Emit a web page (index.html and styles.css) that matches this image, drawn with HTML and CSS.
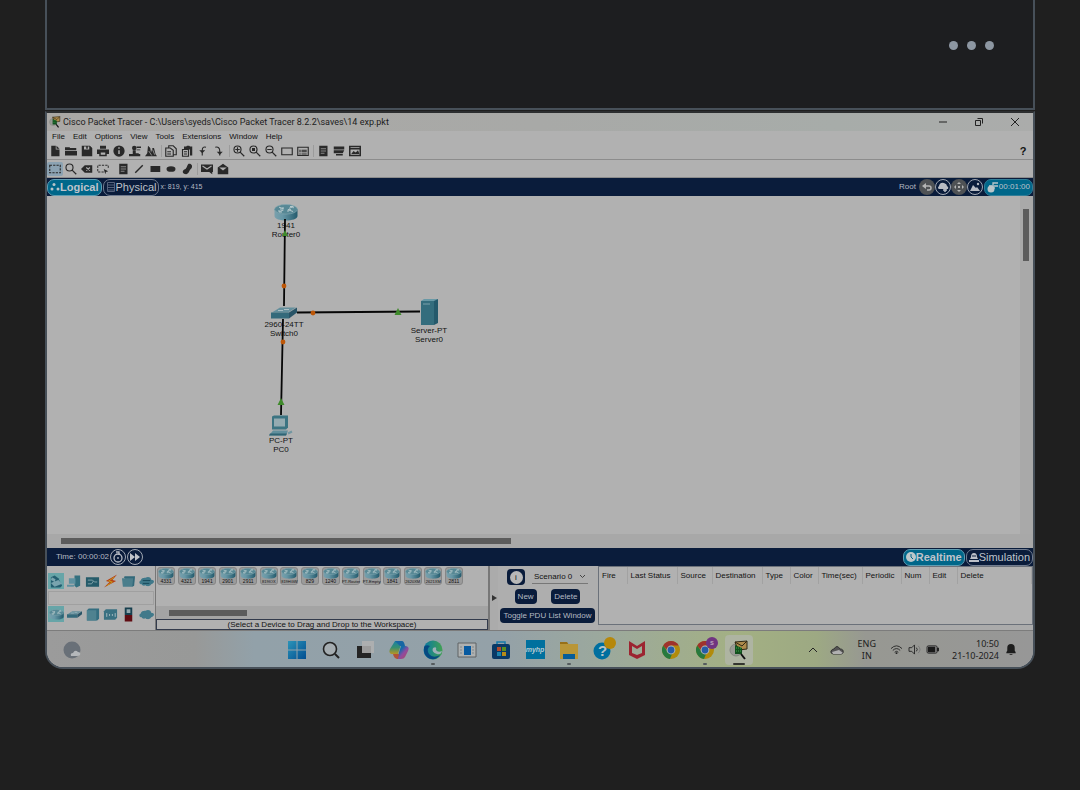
FILE: index.html
```html
<!DOCTYPE html>
<html lang="en">
<head>
<meta charset="utf-8">
<title>Cisco Packet Tracer</title>
<link rel="stylesheet" href="styles.css">
</head>
<body>
<svg class="sprite" aria-hidden="true">
  <defs>
    <linearGradient id="teal" x1="0" x2="1"><stop offset="0" stop-color="#79a0ac"/><stop offset=".35" stop-color="#6797a6"/><stop offset="1" stop-color="#245b6d"/></linearGradient>
    <linearGradient id="win" x1="0" x2="1" y2="1"><stop offset="0" stop-color="#2c94b8"/><stop offset="1" stop-color="#004d91"/></linearGradient>
    <linearGradient id="edge" x1="0" x2="1"><stop offset="0" stop-color="#0878a5"/><stop offset="1" stop-color="#42a052"/></linearGradient>
    <linearGradient id="copA" x1="0" x2="1" y2="1"><stop offset="0" stop-color="#087a9f"/><stop offset=".3" stop-color="#1769a9"/><stop offset=".55" stop-color="#8e4ba0"/><stop offset="1" stop-color="#b64858"/></linearGradient>
    <linearGradient id="copB" x1="0" x2="0" y2="1"><stop offset="0" stop-color="#1b7fa6"/><stop offset=".5" stop-color="#368f71"/><stop offset="1" stop-color="#b69424"/></linearGradient>
    <symbol id="router" viewBox="0 0 24 17"><path fill="url(#teal)" d="M.5 5v7c0 6 23 6 23 0V5z"/><ellipse cx="12" cy="5.3" rx="11.5" ry="4.8" fill="#578895" stroke="#86a9b2" stroke-width=".6"/><path d="M5 3.2l4.500 1.500M9 3v2H6M19 7.500l-5-1.800M14 8V5.700h3M5.500 7.500l4-1.500M5 6v2h3M15 4.300l4-1.500M16 2.500h3.200v1.700" stroke="#b5c8cc" fill="none"/></symbol>
    <symbol id="switch" viewBox="0 0 26 13"><path fill="#648f9c" d="M1 6L9 1h16l-8 5z"/><path fill="#346a7b" d="M0 6h18v6H0z"/><path fill="#285467" d="M18 6l8-5v5l-8 6z"/><path d="M7 4h5M13 3h5" stroke="#abc0c6"/></symbol>
    <symbol id="server" viewBox="0 0 17 27"><path fill="#6999a6" d="M0 2l3-2h14l-2 2z"/><path fill="#346d7d" d="M0 2h13v24H0z"/><path fill="#24596b" d="M13 2l4-2v24l-4 2z"/><path d="M2 5h7" stroke="#7ba2ac"/></symbol>
    <symbol id="pc" viewBox="0 0 24 20"><path fill="#3c7482" d="M3 1l2-1h14v12l-2 2H3z"/><path fill="#95abb1" d="M5 3h11v8H5z"/><path fill="#608f9d" d="M4 15h15l-2 5H0z"/><path fill="#2f6474" d="M1 18h17l-1 2H0z"/><path d="M19 18l4-2" stroke="#7196a1" stroke-width="2"/></symbol>
    <symbol id="cloudnet" viewBox="0 0 16 12"><path fill="#40798a" d="M3 9C0 9-.5 6 2 5c0-3 4-3 5-3 3-2 6 0 6 2 4 0 4 4 0 5-2 3-5 2-6 1-2 1-4 0-4-1z"/></symbol>
    <symbol id="doc" viewBox="0 0 16 16"><path d="M3 1h6v5h5v9H3z"/><path d="M10 1l4 4h-4z"/></symbol>
    <symbol id="folder" viewBox="0 0 16 16"><path d="M0 3h6l1 1h8v3H0zM0 8h16v6H0z"/></symbol>
    <symbol id="save" viewBox="0 0 16 16"><path fill-rule="evenodd" d="M1 1h11l3 3v11H1zM4 2v4h7V2H9v3H7V2z"/></symbol>
    <symbol id="print" viewBox="0 0 16 16"><path fill-rule="evenodd" d="M4 1h8v4H4zM0 6h16v6h-3v3H3v-3H0zM5 10v3h6v-3z"/></symbol>
    <symbol id="info" viewBox="0 0 16 16"><circle cx="8" cy="8" r="7.500"/><path d="M8 7v5M8 3v2" stroke="#b0b0b0" stroke-width="2"/></symbol>
    <symbol id="user" viewBox="0 0 16 16"><circle cx="7" cy="4" r="3"/><path d="M5 7h4v4h4v1h2v3H0v-3h5zM10 2h6v2h-6zM10 6h5v1h-5z"/></symbol>
    <symbol id="wizard" viewBox="0 0 16 16"><path d="M4 1l3 3 1 6 2-6 2 0 2 8 2 3H0l3-4z"/><path d="M5 8l4 6M10 6l3 7" stroke="#aaa"/></symbol>
    <symbol id="copy" viewBox="0 0 16 16"><path fill="none" stroke="#292929" stroke-width="1.500" d="M5 4V1h6l4 4v8h-4M1 4h6l4 3v8H1zM3 9h5M3 12h5"/></symbol>
    <symbol id="paste" viewBox="0 0 16 16"><path d="M4 2h3l1-1h3l1 1h3v12h-3V6H4z"/><path fill="none" stroke="#292929" stroke-width="1.500" d="M2 6h8v9H2zM4 9h4M4 12h4"/></symbol>
    <symbol id="undo" viewBox="0 0 16 16"><path fill="none" stroke="#292929" stroke-width="1.500" d="M7 14V7c0-4 2-5 5-4"/><path d="M3 7h8l-4 4z"/></symbol>
    <symbol id="redo" viewBox="0 0 16 16"><path fill="none" stroke="#292929" stroke-width="1.500" d="M3 3c4-1 6 1 6 5v6"/><path d="M5 9h8l-4 4z"/></symbol>
    <symbol id="lens" viewBox="0 0 16 16"><path fill="none" stroke="#292929" stroke-width="1.600" d="M9.500 9.500L15 15"/><circle cx="6" cy="6" r="4.700" fill="none" stroke="#292929" stroke-width="1.500"/></symbol>
    <symbol id="zin" viewBox="0 0 16 16"><use href="#lens"/><path d="M3 6h6M6 3v6" stroke="#292929" stroke-width="1.500"/></symbol>
    <symbol id="zreset" viewBox="0 0 16 16"><use href="#lens"/><path d="M4 4h4v4H4z"/></symbol>
    <symbol id="zout" viewBox="0 0 16 16"><use href="#lens"/><path d="M3 6h6" stroke="#292929" stroke-width="1.500"/></symbol>
    <symbol id="rect" viewBox="0 0 16 16"><path fill="none" stroke="#292929" stroke-width="1.500" d="M1 4h14v9H1z"/></symbol>
    <symbol id="listwin" viewBox="0 0 16 16"><path fill="none" stroke="#292929" stroke-width="1.500" d="M1 3h14v11H1zM3 7h2M6 7h7M3 9h2M6 9h7M3 12h2M6 12h7"/></symbol>
    <symbol id="note" viewBox="0 0 16 16"><path d="M3 1h11v14H3z"/><path d="M5 5h7M5 8h7M5 11h5" stroke="#aaa"/></symbol>
    <symbol id="stack" viewBox="0 0 16 16"><path d="M1 2h14v4H1zM1 7h14l-2 4H1zM4 12h9v2H4z"/></symbol>
    <symbol id="picwin" viewBox="0 0 16 16"><path fill="none" stroke="#292929" stroke-width="2" d="M1 2h14v12H1zM2 5h12"/><path d="M3 12l3-4 3 2 3-3 2 5z"/></symbol>
    <symbol id="select" viewBox="0 0 16 16"><path fill="none" stroke="#292929" stroke-width="1.500" stroke-dasharray="3 1.500" d="M1 3h14v10H1z"/></symbol>
    <symbol id="erase" viewBox="0 0 16 16"><path d="M0 8l5-5h10v10H5z"/><path d="M7 6l5 4M12 6l-5 4" stroke="#b0b0b0" stroke-width="1.500"/></symbol>
    <symbol id="resize" viewBox="0 0 16 16"><path fill="none" stroke="#292929" stroke-width="1.300" stroke-dasharray="3 1.500" d="M9 12H1V3h14v5"/><path d="M9 8l6 3-3 1-1 3z"/></symbol>
    <symbol id="line" viewBox="0 0 16 16"><path d="M3 13L13 3" stroke="#292929" stroke-width="2"/></symbol>
    <symbol id="box" viewBox="0 0 16 16"><path d="M2 4h13v8H2z"/></symbol>
    <symbol id="oval" viewBox="0 0 16 16"><ellipse cx="8" cy="8" rx="6" ry="3.800"/></symbol>
    <symbol id="free" viewBox="0 0 16 16"><path d="M10 1c4-1 6 3 4 6-3 2-3 7-7 8-6 0-6-6-1-7 2-2 2-5 4-7z"/></symbol>
    <symbol id="mail" viewBox="0 0 16 16"><path d="M0 2h16v10h-1v3l-4-3H0z"/><path fill="none" d="M2 4l6 4 6-4" stroke="#b0b0b0" stroke-width="1.500"/></symbol>
    <symbol id="openmail" viewBox="0 0 16 16"><path d="M1 6l7-5 7 5v9H1z"/><path fill="#b0b0b0" d="M3 6h10L8 10z"/></symbol>
    <symbol id="chrome" viewBox="0 0 20 20"><circle cx="10" cy="10" r="9" fill="#b18b0c"/><path fill="#9f322d" d="M2.200 5.500A9 9 0 0117.800 5.500H10L7 11z"/><path fill="#27793e" d="M2.200 5.500L7 12l4 2-2 5A9 9 0 012.200 5.500z"/><circle cx="10" cy="10" r="4.400" fill="#b3b8b8"/><circle cx="10" cy="10" r="3.400" fill="#265da8"/></symbol>
    <symbol id="tracer" viewBox="0 0 20 20"><circle cx="7" cy="10" r="6" fill="#989a94" stroke="#858780"/><path d="M6 2l12-1v8L9 10z" fill="#ae8b4b" stroke="#302914"/><path d="M6 2l7 4 5-5" fill="none" stroke="#302914"/><path fill="#12501e" d="M6 5l7 3v6H6z"/><path d="M12 14l4 5" stroke="#111" stroke-width="2"/><path d="M7 8h5M7 11h5" stroke="#41a84a" stroke-dasharray="1 1"/></symbol>
  </defs>
</svg>

<section class="card">
  <button class="more" aria-label="More options"><i></i><i></i><i></i></button>
</section>

<main class="window">
  <header class="titlebar">
    <svg class="i12"><use href="#tracer"/></svg>
    <h1>Cisco Packet Tracer - C:\Users\syeds\Cisco Packet Tracer 8.2.2\saves\14 exp.pkt</h1>
    <button aria-label="Minimize"><svg class="i10" viewBox="0 0 10 10"><path d="M1 5h8" stroke="#222"/></svg></button>
    <button aria-label="Restore"><svg class="i10" viewBox="0 0 10 10"><path d="M1.500 3.500h5v5h-5zM3.500 1.500h5v5" fill="none" stroke="#222"/></svg></button>
    <button aria-label="Close"><svg class="i10" viewBox="0 0 10 10"><path d="M1 1l8 8M9 1L1 9" stroke="#222"/></svg></button>
  </header>
  <nav class="menubar">
    <button>File</button><button>Edit</button><button>Options</button><button>View</button><button>Tools</button><button>Extensions</button><button>Window</button><button>Help</button>
  </nav>
  <div class="toolbar">
    <button aria-label="New"><svg><use href="#doc"/></svg></button>
    <button aria-label="Open"><svg><use href="#folder"/></svg></button>
    <button aria-label="Save"><svg><use href="#save"/></svg></button>
    <button aria-label="Print"><svg><use href="#print"/></svg></button>
    <button aria-label="Network information"><svg><use href="#info"/></svg></button>
    <button aria-label="User profile"><svg><use href="#user"/></svg></button>
    <button aria-label="Activity wizard"><svg><use href="#wizard"/></svg></button>
    <span class="sep"></span>
    <button aria-label="Copy"><svg><use href="#copy"/></svg></button>
    <button aria-label="Paste"><svg><use href="#paste"/></svg></button>
    <button aria-label="Undo"><svg><use href="#undo"/></svg></button>
    <button aria-label="Redo"><svg><use href="#redo"/></svg></button>
    <span class="sep"></span>
    <button aria-label="Zoom in"><svg><use href="#zin"/></svg></button>
    <button aria-label="Zoom reset"><svg><use href="#zreset"/></svg></button>
    <button aria-label="Zoom out"><svg><use href="#zout"/></svg></button>
    <button aria-label="Viewport"><svg><use href="#rect"/></svg></button>
    <button aria-label="Workspace list"><svg><use href="#listwin"/></svg></button>
    <span class="sep"></span>
    <button aria-label="Drawing palette"><svg><use href="#note"/></svg></button>
    <button aria-label="Custom devices"><svg><use href="#stack"/></svg></button>
    <button aria-label="Cluster view"><svg><use href="#picwin"/></svg></button>
    <button class="help" aria-label="Contents">?</button>
  </div>
  <div class="toolbar">
    <button class="on" aria-label="Select"><svg><use href="#select"/></svg></button>
    <button aria-label="Inspect"><svg><use href="#lens"/></svg></button>
    <button aria-label="Delete object"><svg><use href="#erase"/></svg></button>
    <button aria-label="Resize shape"><svg><use href="#resize"/></svg></button>
    <span class="sep blank"></span>
    <button aria-label="Place note"><svg><use href="#note"/></svg></button>
    <button aria-label="Draw line"><svg><use href="#line"/></svg></button>
    <button aria-label="Draw rectangle"><svg><use href="#box"/></svg></button>
    <button aria-label="Draw ellipse"><svg><use href="#oval"/></svg></button>
    <button aria-label="Draw freeform"><svg><use href="#free"/></svg></button>
    <span class="sep"></span>
    <button aria-label="Add simple PDU"><svg><use href="#mail"/></svg></button>
    <button aria-label="Add complex PDU"><svg><use href="#openmail"/></svg></button>
  </div>

  <div class="navy">
    <button class="tab active"><svg class="i10" viewBox="0 0 10 10" fill="#b9c5c9"><circle cx="2" cy="7" r="1.500"/><circle cx="4" cy="2.500" r="1.500"/><circle cx="8" cy="7" r="1.500"/></svg>Logical</button>
    <button class="tab"><svg class="i10" viewBox="0 0 10 10"><path d="M1.500.5h7v9h-7zM2 3h6M2 5.500h6M2 8h6" fill="none" stroke="#55627c"/></svg>Physical</button>
    <span class="coords">x: 819, y: 415</span>
    <span class="root">Root</span>
    <button class="round gray" aria-label="Back"><svg class="i10" viewBox="0 0 10 10"><path d="M3 4h4q2 0 2 2t-2 2H5" fill="none" stroke="#b5b5b5" stroke-width="1.500"/><path d="M0 4l4-3v6z" fill="#b5b5b5"/></svg></button>
    <button class="round ring" aria-label="New cluster"><svg class="i12" viewBox="0 0 12 12" fill="#b8bcc4"><path d="M2 8Q0 7 2 5q1-4 5-3 3 1 3 3 2 1 1 3z"/><path d="M8 6v5M6 9h4" stroke="#b8bcc4" stroke-width="1.500"/></svg></button>
    <button class="round gray" aria-label="Move object"><svg class="i10" viewBox="0 0 10 10" fill="#b5b5b5"><path d="M5 0l2 2H3zM5 10l2-2H3zM0 5l2-2v4zM10 5L8 3v4zM4 4h2v2H4z"/></svg></button>
    <button class="round ring" aria-label="Set background"><svg class="i12" viewBox="0 0 12 12" fill="#b8bcc4"><path d="M1 10l3-6 3 3 1-1 3 4z"/><circle cx="9" cy="3" r="1.200"/></svg></button>
    <button class="tab active clock"><svg class="i12" viewBox="0 0 12 12"><circle cx="4" cy="8" r="3.500" fill="#b8c6ca"/><path d="M2 5h9M6 4V2h5M7 6v2" stroke="#b8c6ca" stroke-width="1.300" fill="none"/></svg>00:01:00</button>
  </div>

  <section class="workspace" aria-label="Logical workspace">
    <div class="canvas">
      <div class="node router"><svg><use href="#router"/></svg><span>1941</span><span>Router0</span></div>
      <div class="node switch"><svg><use href="#switch"/></svg><span>2960-24TT</span><span>Switch0</span></div>
      <div class="node server"><svg><use href="#server"/></svg><span>Server-PT</span><span>Server0</span></div>
      <div class="node pc"><svg><use href="#pc"/></svg><span>PC-PT</span><span>PC0</span></div>
      <svg class="links" width="420" height="260" viewBox="0 0 420 260">
        <path d="M238 23L237 110M250 116.500L373 115.500M236 123L234 219" stroke="#060606" stroke-width="1.800"/>
        <g fill="#bd5708"><circle cx="237" cy="90" r="2.400"/><circle cx="266" cy="117" r="2.400"/><circle cx="236" cy="146" r="2.400"/></g>
        <g fill="#3f8a2b"><path d="M238 34l3 6h-6zM351 112l3.500 7h-7zM234 202l3.500 7h-7z"/></g>
      </svg>
    </div>
    <div class="vscroll"><i></i></div>
    <div class="hscroll"><i></i></div>
  </section>

  <div class="navy">
    <span class="time">Time: 00:00:02</span>
    <button class="round ring" aria-label="Power cycle devices"><svg class="i12" viewBox="0 0 12 12" fill="none" stroke="#b8bcc4"><circle cx="6" cy="7" r="4" stroke-width="1.300"/><path d="M4 1h3v3M6 6v2" stroke-width="1.300"/></svg></button>
    <button class="round ring" aria-label="Fast forward"><svg class="i12" viewBox="0 0 12 12" fill="#c0c3c9"><path d="M1 2l5 4-5 4zM6 2l5 4-5 4z"/></svg></button>
    <button class="tab active realtime"><svg class="i10" viewBox="0 0 10 10"><circle cx="5" cy="5" r="5" fill="#bcc7ca"/><path d="M5 2v3l2 2" stroke="#00678a" fill="none"/></svg>Realtime</button>
    <button class="tab"><svg class="i10" viewBox="0 0 10 10"><path d="M2 5q0-4 3-4t3 4l1 2H1zM0 8h10v2H0z" fill="#bcc0c8"/><path d="M4 3v2M6 3v2" stroke="#0a1c3b"/></svg>Simulation</button>
  </div>

  <div class="bottom">
    <div class="types">
      <div class="icons">
        <button class="on" aria-label="Network devices"><svg viewBox="0 0 16 15"><path fill="#245f70" d="M2 3l4-2 4 3 4 8-2 2H2z"/><path fill="#79a4ae" d="M3 3l4 2-1 3-4-2zM2 9l8-3 4 4-8 3z"/></svg></button>
        <button aria-label="End devices"><svg viewBox="0 0 16 15"><path fill="#34707f" d="M8 1h6v11l-4 2-2-2z"/><path fill="#5f91a0" d="M2 4h7v6H2zM0 11h9l-2 2H0z"/></svg></button>
        <button aria-label="Components"><svg viewBox="0 0 16 15"><path fill="#255b6a" d="M1 3h14v10H1z"/><path d="M3 6h5l2 2h3M3 10h4l2-3" stroke="#83a3aa" fill="none"/></svg></button>
        <button aria-label="Connections"><svg viewBox="0 0 16 15"><path fill="#b63e12" d="M15 0L3 7l4 1-6 6 13-7-4-1z"/><path d="M12 3L6 7l4 1-6 4" stroke="#c49a1b" fill="none"/></svg></button>
        <button aria-label="Miscellaneous"><svg viewBox="0 0 16 15"><path fill="#32697a" d="M3 3l1-1h11l-1 10-2 1z"/><path fill="#4b7e8c" d="M1 4h12l-1 9H2z"/></svg></button>
        <button aria-label="Multiuser"><svg viewBox="0 0 16 12"><use href="#cloudnet"/><path d="M4 5h8M4 8h7" stroke="#17495a"/></svg></button>
      </div>
      <div class="caption"></div>
      <div class="icons">
        <button class="on" aria-label="Routers"><svg><use href="#router"/></svg></button>
        <button aria-label="Switches"><svg><use href="#switch"/></svg></button>
        <button aria-label="Hubs"><svg viewBox="0 0 16 15"><path fill="#346e80" d="M2 3l2-2h11v11l-2 2H2z"/><path fill="#4f8290" d="M2 3h10v11H2z"/></svg></button>
        <button aria-label="Wireless devices"><svg viewBox="0 0 16 15"><path fill="#3a7182" d="M1 4l2-2h12v9l-2 2H1z"/><path d="M4 6v4M7 7v2M10 7v2M13 6v4" stroke="#a9bcc1"/></svg></button>
        <button aria-label="Security"><svg viewBox="0 0 16 15"><path fill="#173f4e" d="M4 0h8v8H4z"/><path fill="#91a7ae" d="M6 2h4v4H6z"/><path fill="#600c12" d="M4 8h8v7H4z"/></svg></button>
        <button aria-label="WAN emulation"><svg><use href="#cloudnet"/></svg></button>
      </div>
    </div>

    <div class="palette">
      <div class="devices">
        <button><svg><use href="#router"/></svg>4331</button><button><svg><use href="#router"/></svg>4321</button><button><svg><use href="#router"/></svg>1941</button><button><svg><use href="#router"/></svg>2901</button><button><svg><use href="#router"/></svg>2911</button><button class="long"><svg><use href="#router"/></svg>819IOX</button><button class="long"><svg><use href="#router"/></svg>819HGW</button><button><svg><use href="#router"/></svg>829</button><button><svg><use href="#router"/></svg>1240</button><button class="long"><svg><use href="#router"/></svg>PT-Router</button><button class="long"><svg><use href="#router"/></svg>PT-Empty</button><button><svg><use href="#router"/></svg>1841</button><button class="long"><svg><use href="#router"/></svg>2620XM</button><button class="long"><svg><use href="#router"/></svg>2621XM</button><button><svg><use href="#router"/></svg>2811</button>
      </div>
      <div class="pscroll"><i></i></div>
      <p>(Select a Device to Drag and Drop to the Workspace)</p>
    </div>
    <button class="splitter" aria-label="Collapse panel"><svg viewBox="0 0 5 6"><path d="M0 0l5 3-5 3z" fill="#333"/></svg></button>

    <div class="scenario">
      <div class="row">
        <button class="info" aria-label="Scenario information"><span>i</span></button>
        <div class="combo">
          <select aria-label="Scenario"><option>Scenario 0</option></select>
          <svg viewBox="0 0 7 5"><path d="M1 1l2.500 2.500L6 1" fill="none" stroke="#444"/></svg>
        </div>
      </div>
      <div class="row"><button class="pill">New</button><button class="pill">Delete</button></div>
      <button class="pill">Toggle PDU List Window</button>
    </div>

    <div class="pdu">
      <table>
        <colgroup><col class="w28"><col class="w50"><col class="w35"><col class="w50"><col class="w28"><col class="w28"><col class="w44"><col class="w39"><col class="w28"><col class="w28"><col></colgroup>
        <thead><tr><th>Fire</th><th>Last Status</th><th>Source</th><th>Destination</th><th>Type</th><th>Color</th><th>Time(sec)</th><th>Periodic</th><th>Num</th><th>Edit</th><th>Delete</th></tr></thead>
      </table>
    </div>
  </div>

  <footer class="taskbar">
    <button class="weather" aria-label="Weather"><svg viewBox="0 0 18 18"><circle cx="9" cy="9" r="8.500" fill="#697078"/><path fill="#b5b8bb" d="M8 15q-1-3 2-3 2-4 5-1 3 0 2 3-1 1-3 1z"/></svg></button>
    <div class="apps">
      <button aria-label="Start"><svg viewBox="0 0 20 20"><path fill="url(#win)" d="M1 1h8.500v8.500H1zM10.500 1H19v8.500h-8.500zM1 10.500h8.500V19H1zM10.500 10.500H19V19h-8.500z"/></svg></button>
      <button aria-label="Search"><svg viewBox="0 0 20 20"><circle cx="9" cy="9" r="6.500" fill="#a5adb1" stroke="#222" stroke-width="1.600"/><path d="M14 14l4 4" stroke="#222" stroke-width="2"/></svg></button>
      <button aria-label="Task view"><svg viewBox="0 0 20 20"><path fill="#242424" d="M2 6h14v12H2z"/><path fill="#b2b2b2" opacity=".85" d="M7 1h12v12H7z"/></svg></button>
      <button aria-label="Copilot"><svg viewBox="0 0 20 20"><path fill="url(#copB)" d="M6 1h7L9 14H4Q-1 14 1 9z"/><path fill="#1766a3" d="M6 1h7q2 0 3 5h-5z"/><path fill="url(#copA)" d="M12 6h4q5 0 3 5l-3 6q-1 2-4 2H8z"/><path fill="#b15337" d="M4 14h6l-1 5Q5 19 4 14z"/></svg></button>
      <button class="run" aria-label="Edge"><svg viewBox="0 0 20 20"><circle cx="10" cy="10" r="9.500" fill="url(#edge)"/><path fill="#064981" d="M1 7q2-3 6-1-4 3-1 8 4 5 11 1-3 5-9 4Q0 17 1 7z"/><path fill="#9db0b8" d="M10 8q4-2 3 2 2 3 6 1-1 4-5 3-6-2-4-6z"/></svg></button>
      <button aria-label="Viewer"><svg viewBox="0 0 20 20"><path fill="#aeb1b1" stroke="#5e6264" d="M1 3h18v14H1z"/><path fill="#075aa0" d="M7 6h7v9H7z"/><path d="M3 7h2M3 10h2M3 13h2M15 7h2M15 10h2M15 13h2" stroke="#80878b"/></svg></button>
      <button aria-label="Microsoft Store"><svg viewBox="0 0 20 20"><path d="M6 5V2h8v3" fill="none" stroke="#147aaa" stroke-width="1.500"/><rect x="1" y="4" width="18" height="15" rx="2" fill="#093966"/><path fill="#b34a2d" d="M6 7h4v4H6z"/><path fill="#598d22" d="M11 7h4v4h-4z"/><path fill="#1b83ad" d="M6 12h4v4H6z"/><path fill="#b68b18" d="M11 12h4v4h-4z"/></svg></button>
      <button class="hp"><span>myhp</span></button>
      <button class="run" aria-label="File Explorer"><svg viewBox="0 0 20 20"><path fill="#987018" d="M1 2h7l2 3H1z"/><path fill="#b99638" d="M1 4h18v15H1z"/><path fill="#075d99" d="M4 14h12v5H4z"/></svg></button>
      <button class="help-app" aria-label="Help"><svg viewBox="0 0 20 20"><circle cx="9" cy="11" r="8.500" fill="#006f9f"/></svg><b>?</b><i class="badge"></i></button>
      <button aria-label="McAfee"><svg viewBox="0 0 20 20"><path fill="#9c2430" d="M2 1l8 5 8-5v14l-8 4-8-4zM5 6v7l5 2 5-2V6l-5 3z" fill-rule="evenodd"/></svg></button>
      <button aria-label="Chrome"><svg><use href="#chrome"/></svg></button>
      <button class="run" aria-label="Chrome profile"><svg><use href="#chrome"/></svg><i class="badge purple">s</i></button>
      <button class="run current" aria-label="Packet Tracer"><svg><use href="#tracer"/></svg></button>
    </div>
    <div class="tray">
      <button aria-label="Hidden icons"><svg class="i10" viewBox="0 0 10 10"><path d="M1 7l4-4 4 4" fill="none" stroke="#252525"/></svg></button>
      <button class="cloud" aria-label="OneDrive"><svg viewBox="0 0 14 10"><path d="M3 9Q0 8 1 6q1-2 3-2 3-5 6 0 4 0 3 4-1 1-2 1z" fill="#555" stroke="#333"/><path d="M2 7l7-2 4 3-2 1H3z" fill="#b0b0b0"/></svg></button>
      <span class="lang">ENG<br>IN</span>
      <button class="status" aria-label="Network, volume and battery">
        <svg viewBox="0 0 14 12"><path d="M1 5q6-6 12 0M3 7q4-4 8 0M5 9q2-2 4 0" fill="none" stroke="#252525"/><circle cx="7" cy="10" r="1" fill="#252525"/></svg>
        <svg viewBox="0 0 14 12"><path d="M1 4h3l3-3v10L4 8H1zM9 4q2 2 0 4" fill="none" stroke="#252525"/><path d="M11 2q4 4 0 8" fill="none" stroke="#777"/></svg>
        <svg viewBox="0 0 14 12"><rect x="1" y="2" width="11" height="8" rx="1.500" fill="#8f8f8f" stroke="#252525"/><path d="M2 3h8v6H2zM12 4h2v4h-2z" fill="#191919"/></svg>
      </button>
      <time>10:50<br>21-10-2024</time>
      <button class="bell" aria-label="Notifications"><svg viewBox="0 0 12 14"><path fill="#1d1d1d" d="M1 10l1-2V5q0-4 4-4t4 4v3l1 2v1H1zM4 12h4q-2 2-4 0z"/></svg></button>
    </div>
  </footer>
</main>
</body>
</html>
```
FILE: styles.css
```css
* { box-sizing: border-box; }
body { margin: 0; background: #1f1f1f; color: #111; font: 8px/10px "Liberation Sans", Arial, sans-serif; }
.sprite { position: absolute; width: 0; height: 0; }
button, select { font: inherit; color: inherit; margin: 0; padding: 0; border: 0; background: none; }
button { display: flex; align-items: center; justify-content: center; white-space: nowrap; }
svg { display: block; flex: none; }
.i10 { width: 10px; height: 10px; }
.i12 { width: 12px; height: 12px; }

.card { height: 110px; margin: 0 45px; padding: 41px 39px 0 0; border: 2px solid #475059; border-top: 0; background: #1d1e20; display: flex; justify-content: flex-end; align-items: flex-start; }
.more { gap: 9px; }
.more i { width: 9px; height: 9px; border-radius: 50%; background: #8d97a2; }

.window { margin: 1px 45px 0; border: 2px solid #475059; border-top-color: #2c2e30; border-radius: 0 0 18px 18px; background: #b1b1b1; overflow: hidden; }
.titlebar { display: flex; align-items: center; height: 18px; padding-left: 2px; background: linear-gradient(90deg, #aaa8a5, #a8a9a7 50%, #a7aca9 80%, #abacab); }
.titlebar h1 { flex: 1; margin: 0 0 0 2px; font: 9px/16px Roboto, "Noto Sans", sans-serif; color: #1c1c1c; white-space: nowrap; }
.titlebar button { width: 36px; }
.menubar { display: flex; gap: 8px; height: 11px; padding-left: 5px; }
.toolbar { display: flex; align-items: center; height: 18px; padding-top: 1px; border-bottom: 1px solid #8c8c8c; fill: #292929; }
.toolbar button { width: 16px; height: 14px; }
.toolbar svg { width: 12px; height: 12px; }
.toolbar .on { background: #8ba2b2; border-radius: 2px; }
.toolbar .help { margin-left: auto; margin-right: 2px; font-size: 11px; font-weight: bold; }
.sep { width: 1px; height: 12px; margin: 0 1px 0 2px; background: #9b9b9b; }
.sep.blank { background: none; }

.navy { display: flex; align-items: center; height: 18px; background: #0a1c3b; color: #b5bac2; }
.tab { height: 17px; padding: 0 2px; border: 1px solid #717c90; border-radius: 7px; font-size: 11px; color: #bfc3ca; margin-left: 1px; }
.tab:first-child { margin-left: 0; }
.tab.active { background: #00678a; border-color: #5f9db2; font-weight: bold; }
.coords { font-size: 7px; margin-left: 1px; }
.root { margin-left: auto; margin-right: 3px; }
.round { width: 16px; height: 16px; border-radius: 50%; }
.round.gray { background: #4f5255; }
.round.ring { border: 1px solid #a1a8b3; }
.time + .ring { margin: 0 1px; }
.tab.clock { font-size: 8px; font-weight: normal; border-color: #327e98; }
.time { margin-left: 9px; }
.realtime { margin-left: auto; }

.workspace { display: grid; grid-template-columns: 1fr 13px; grid-template-rows: 338px 14px; }
.canvas { position: relative; overflow: hidden; }
.links { position: absolute; left: 0; top: 0; }
.node { position: absolute; display: flex; flex-direction: column; align-items: center; width: 50px; line-height: 9px; }
.router { left: 214px; top: 8px; }
.router svg { width: 24px; height: 17px; }
.switch { left: 212px; top: 110px; }
.switch svg { width: 26px; height: 14px; }
.server { left: 357px; top: 103px; }
.server svg { width: 17px; height: 27px; }
.pc { left: 209px; top: 219px; }
.pc svg { width: 24px; height: 21px; }
.vscroll { padding: 13px 4px 0 3px; background: #a9a9a9; }
.vscroll i { display: block; height: 52px; background: #5c5c5c; }
.hscroll { grid-column: 1 / -1; padding: 4px 14px; background: #a8a8a8; }
.hscroll i { display: block; width: 47%; height: 6px; background: #5c5c5c; }

.bottom { display: flex; height: 65px; border-bottom: 1px solid #7c7c7c; background: #ababab; }
.types { width: 108px; padding: 7px 1px 8px; display: flex; flex-direction: column; justify-content: space-between; background: #b1b1b1; }
.icons { display: flex; gap: 2px; }
.icons button { width: 16px; height: 16px; }
.icons .on { background: #67a5a8; }
.icons svg { width: 15px; height: 15px; }
.caption { height: 14px; border: 1px solid #a0a0a0; }
.palette { width: 333px; display: flex; flex-direction: column; border-left: 1px solid #777; background: #b1b1b1; }
.devices { flex: 1; display: flex; justify-content: space-between; align-items: flex-start; padding: 1px 25px 0 1px; }
.devices button { flex-direction: column; width: 18px; height: 18px; border: 1px solid #868686; border-radius: 3px; background: #9b9b9b; font-size: 5px; line-height: 5px; }
.devices .long { font-size: 4px; }
.devices svg { width: 16px; height: 11px; }
.pscroll { height: 13px; padding: 4px 13px; background: #a4a4a4; }
.pscroll i { display: block; width: 78px; height: 6px; background: #5c5c5c; }
.palette p { margin: 0; border: 1px solid #333b4c; height: 11px; line-height: 10px; text-align: center; }
.splitter { width: 10px; border-left: 2px solid #777; }
.splitter svg { width: 5px; height: 6px; }
.scenario { width: 100px; padding: 3px 3px 7px 2px; display: flex; flex-direction: column; justify-content: space-between; background: #aeaeae; }
.row { display: flex; align-items: center; justify-content: space-evenly; }
.scenario .info { width: 18px; height: 16px; border-radius: 4px; background: #0a1c3b; }
.info span { width: 13px; height: 13px; border-radius: 50%; background: #b8b8b8; line-height: 13px; }
.combo { display: flex; align-items: center; width: 56px; height: 13px; border-bottom: 1px solid #777; }
.combo select { flex: 1; min-width: 0; padding-left: 2px; appearance: none; }
.combo svg { width: 7px; height: 5px; margin-right: 2px; }
.pill { height: 15px; padding: 0 3px; border-radius: 4px; background: #0a1c3b; color: #b5bac2; }
.pdu { flex: 1; min-width: 0; margin-bottom: 5px; border: 1px solid #6b717a; background: #b1b1b1; }
.pdu table { width: 100%; table-layout: fixed; border-collapse: collapse; }
.pdu th { height: 17px; padding: 0 0 0 3px; border-right: 1px solid #a2a2a2; text-align: left; font-weight: normal; white-space: nowrap; }
.w28 { width: 28px; }
.w35 { width: 35px; }
.w39 { width: 39px; }
.w44 { width: 44px; }
.w50 { width: 50px; }

.taskbar { display: flex; align-items: center; height: 36px; padding-top: 1px; background: linear-gradient(90deg, #9b9b9b, #989998 15%, #92a1a9 21%, #94a1a8 46%, #9ca99c 57%, #a3b083 70%, #9da983 78%, #979892 83%, #979797); }
.weather { width: 18px; margin-left: 16px; }
.weather svg { width: 18px; height: 18px; }
.apps { display: flex; margin-left: 199px; }
.apps button { position: relative; width: 34px; height: 30px; }
.apps svg { width: 20px; height: 20px; }
.run::after { content: ""; position: absolute; bottom: 0; left: 15px; width: 4px; height: 2px; border-radius: 1px; background: #555b5e; }
.apps .current { width: 28px; margin-left: 3px; border-radius: 4px; background: #aeb4a2; }
.apps .current::after { left: 8px; width: 12px; background: #33352f; }
.hp span { width: 19px; height: 19px; background: #00709e; color: #b8cad2; font: italic bold 7px/19px "Liberation Sans", sans-serif; }
.help-app b { position: absolute; left: 12px; top: 8px; font-size: 15px; line-height: 16px; color: #b7c3c7; }
.badge { position: absolute; left: 18px; top: 2px; width: 12px; height: 12px; border-radius: 50%; background: #b6880b; }
.badge.purple { background: #703481; color: #b5a1ba; font: bold 7px/11px "Liberation Sans", sans-serif; }
.tray { display: flex; align-items: center; margin-left: auto; margin-right: 16px; font: 9px/12px "Noto Sans", sans-serif; color: #202020; }
.cloud { margin: 0 14px 0 12px; }
.cloud svg { width: 14px; height: 10px; }
.lang { text-align: center; }
.status { gap: 5px; margin: 0 13px 0 14px; }
.status svg { width: 13px; height: 11px; }
.tray time { text-align: right; }
.bell { margin-left: 6px; }
.bell svg { width: 12px; height: 13px; }
```
